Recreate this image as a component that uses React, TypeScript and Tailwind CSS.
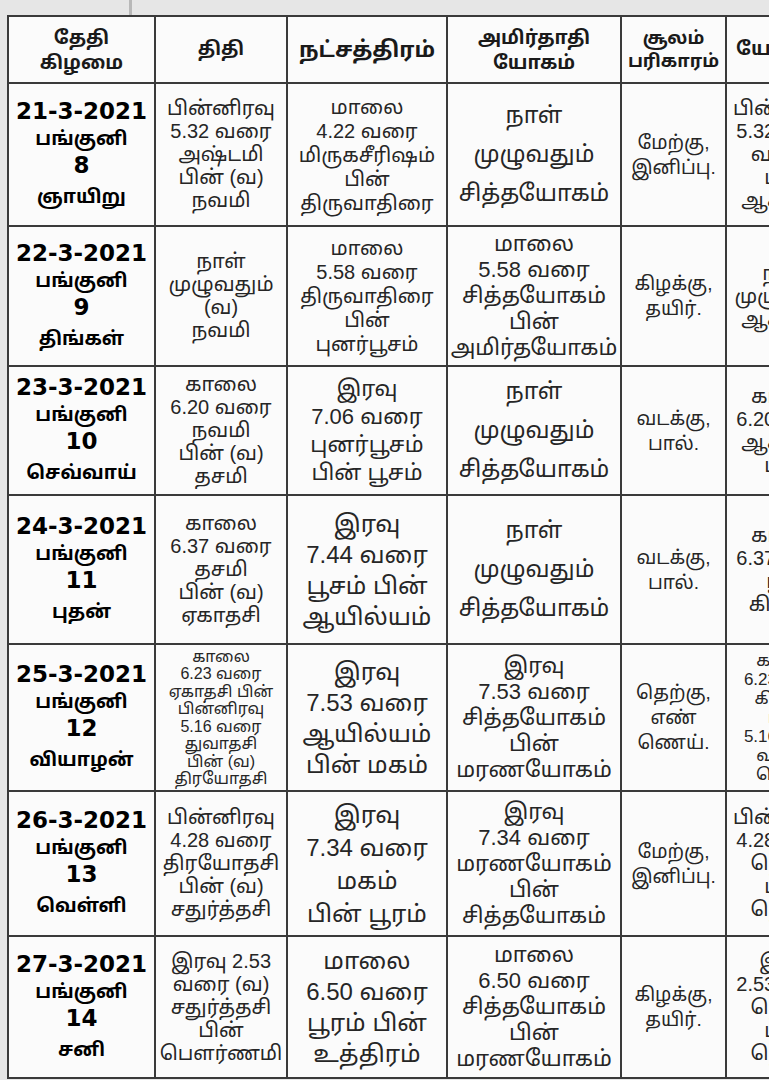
import React from 'react';

type Cell = { lines: string[]; cls?: string };

const HEAD: Cell[] = [
  { lines: ['தேதி', 'கிழமை'], cls: 'text-[19px] leading-[25px]' },
  { lines: ['திதி'], cls: 'text-[19px]' },
  { lines: ['நட்சத்திரம்'], cls: 'text-[22px]' },
  { lines: ['அமிர்தாதி', 'யோகம்'], cls: 'text-[19px] leading-[25px]' },
  { lines: ['சூலம்', 'பரிகாரம்'], cls: 'text-[18px] leading-[23px]' },
  { lines: ['யோகினி'], cls: 'text-[19px]' }
];

const C3_4 = 'text-[24px] leading-[31px]';
const C4_3 = 'text-[23px] leading-[39px]';

const ROWS: Cell[][] = [
  [
    { lines: ['21-3-2021', 'பங்குனி', '8', 'ஞாயிறு'] },
    { lines: ['பின்னிரவு', '5.32 வரை', 'அஷ்டமி', 'பின் (வ)', 'நவமி'] },
    { lines: ['மாலை', '4.22 வரை', 'மிருகசீரிஷம்', 'பின்', 'திருவாதிரை'] },
    { lines: ['நாள்', 'முழுவதும்', 'சித்தயோகம்'], cls: C4_3 },
    { lines: ['மேற்கு,', 'இனிப்பு.'] },
    { lines: ['பின்னிரவு', '5.32 வரை', 'வடக்கு', 'பின்', 'ஆகாயம்'] }
  ],
  [
    { lines: ['22-3-2021', 'பங்குனி', '9', 'திங்கள்'] },
    { lines: ['நாள்', 'முழுவதும்', '(வ)', 'நவமி'] },
    { lines: ['மாலை', '5.58 வரை', 'திருவாதிரை', 'பின்', 'புனர்பூசம்'] },
    { lines: ['மாலை', '5.58 வரை', 'சித்தயோகம்', 'பின்', 'அமிர்தயோகம்'] },
    { lines: ['கிழக்கு,', 'தயிர்.'] },
    { lines: ['நாள்', 'முழுவதும்', 'ஆகாயம்'] }
  ],
  [
    { lines: ['23-3-2021', 'பங்குனி', '10', 'செவ்வாய்'] },
    { lines: ['காலை', '6.20 வரை', 'நவமி', 'பின் (வ)', 'தசமி'] },
    { lines: ['இரவு', '7.06 வரை', 'புனர்பூசம்', 'பின் பூசம்'], cls: 'text-[22px] leading-[28px]' },
    { lines: ['நாள்', 'முழுவதும்', 'சித்தயோகம்'], cls: C4_3 },
    { lines: ['வடக்கு,', 'பால்.'] },
    { lines: ['காலை', '6.20 வரை', 'ஆகாயம்', 'பின்'] }
  ],
  [
    { lines: ['24-3-2021', 'பங்குனி', '11', 'புதன்'] },
    { lines: ['காலை', '6.37 வரை', 'தசமி', 'பின் (வ)', 'ஏகாதசி'] },
    { lines: ['இரவு', '7.44 வரை', 'பூசம் பின்', 'ஆயில்யம்'], cls: C3_4 },
    { lines: ['நாள்', 'முழுவதும்', 'சித்தயோகம்'], cls: C4_3 },
    { lines: ['வடக்கு,', 'பால்.'] },
    { lines: ['காலை', '6.37 வரை', 'பூமி', 'கிழக்கு'] }
  ],
  [
    { lines: ['25-3-2021', 'பங்குனி', '12', 'வியாழன்'] },
    {
      lines: ['காலை', '6.23 வரை', 'ஏகாதசி பின்', 'பின்னிரவு', '5.16 வரை', 'துவாதசி', 'பின் (வ)', 'திரயோதசி'],
      cls: 'text-[16px] leading-[17.5px]'
    },
    { lines: ['இரவு', '7.53 வரை', 'ஆயில்யம்', 'பின் மகம்'], cls: C3_4 },
    { lines: ['இரவு', '7.53 வரை', 'சித்தயோகம்', 'பின்', 'மரணயோகம்'] },
    { lines: ['தெற்கு,', 'எண்', 'ணெய்.'] },
    { lines: ['காலை', '6.23 வரை', 'கிழக்கு', 'பின்', '5.16 வரை', 'வடக்கு', 'தெற்கு'], cls: 'text-[17px] leading-[19px]' }
  ],
  [
    { lines: ['26-3-2021', 'பங்குனி', '13', 'வெள்ளி'] },
    { lines: ['பின்னிரவு', '4.28 வரை', 'திரயோதசி', 'பின் (வ)', 'சதுர்த்தசி'] },
    { lines: ['இரவு', '7.34 வரை', 'மகம்', 'பின் பூரம்'], cls: 'text-[24px] leading-[33px]' },
    { lines: ['இரவு', '7.34 வரை', 'மரணயோகம்', 'பின்', 'சித்தயோகம்'] },
    { lines: ['மேற்கு,', 'இனிப்பு.'] },
    { lines: ['பின்னிரவு', '4.28 வரை', 'தெற்கு', 'பின்', 'தெற்கு'] }
  ],
  [
    { lines: ['27-3-2021', 'பங்குனி', '14', 'சனி'] },
    { lines: ['இரவு 2.53', 'வரை (வ)', 'சதுர்த்தசி', 'பின்', 'பௌர்ணமி'] },
    { lines: ['மாலை', '6.50 வரை', 'பூரம் பின்', 'உத்திரம்'], cls: C3_4 },
    { lines: ['மாலை', '6.50 வரை', 'சித்தயோகம்', 'பின்', 'மரணயோகம்'] },
    { lines: ['கிழக்கு,', 'தயிர்.'] },
    { lines: ['இரவு', '2.53 வரை', 'தெற்கு', 'பின்', 'தெற்கு'] }
  ]
];

// default size per column, used when a cell gives none
const COL_SIZE = [
  '',
  'text-[20px] leading-[23px]',
  'text-[20px] leading-[24px]',
  'text-[22px] leading-[26px]',
  'text-[19px] leading-[25px]',
  'text-[20px] leading-[23px]'
];

function DateCell({ cell }: { cell: Cell }) {
  return (
    <div className="flex flex-col items-center justify-center overflow-hidden border-b-2 border-r-2 border-[#3a3a3a] bg-[#fbfbfb] pt-1 text-center font-bold text-black">
      {cell.lines.map((line, i) =>
        i % 2 === 0 ? (
          <span key={i} className="whitespace-nowrap font-['DejaVu_Sans',sans-serif] text-[23px] leading-[27px]">
            {line}
          </span>
        ) : (
          <span key={i} className={`whitespace-nowrap text-[19px] ${i === 3 ? 'leading-[36px]' : 'leading-[27px]'}`}>
            {line}
          </span>
        )
      )}
    </div>
  );
}

function TableCell({ cell, col, head }: { cell: Cell; col: number; head?: boolean }) {
  const size = cell.cls ?? COL_SIZE[col];
  return (
    <div
      className={`flex flex-col items-center justify-center overflow-hidden border-b-2 border-r-2 border-[#3a3a3a] bg-[#fbfbfb] text-center ${
        head ? 'font-bold text-[#1a1a1a]' : 'text-[#262626]'
      }`}
    >
      {cell.lines.map((line, i) => (
        <span key={i} className={`whitespace-nowrap ${size}`}>
          {line}
        </span>
      ))}
    </div>
  );
}

export default function App() {
  return (
    <div className="h-[1080px] w-[769px] overflow-hidden bg-[#e6e6e6] font-['Liberation_Sans','Noto_Sans_Tamil','Noto_Sans',sans-serif]">
      <div className="flex h-[15px]">
        <div className="ml-[129px] h-full w-[3px] bg-[#b8b8b8]" />
      </div>
      <div className="pl-[7px]">
        <div className="grid w-[842px] grid-cols-[147px_132px_160px_174px_105px_122px] grid-rows-[67px_143px_140px_129px_149px_147px_145px_142px] border-l-2 border-t-2 border-[#3a3a3a]">
          {HEAD.map((cell, c) => (
            <TableCell key={`h${c}`} cell={cell} col={c} head />
          ))}
          {ROWS.map((row, r) =>
            row.map((cell, c) =>
              c === 0 ? <DateCell key={`${r}-${c}`} cell={cell} /> : <TableCell key={`${r}-${c}`} cell={cell} col={c} />
            )
          )}
        </div>
      </div>
    </div>
  );
}
